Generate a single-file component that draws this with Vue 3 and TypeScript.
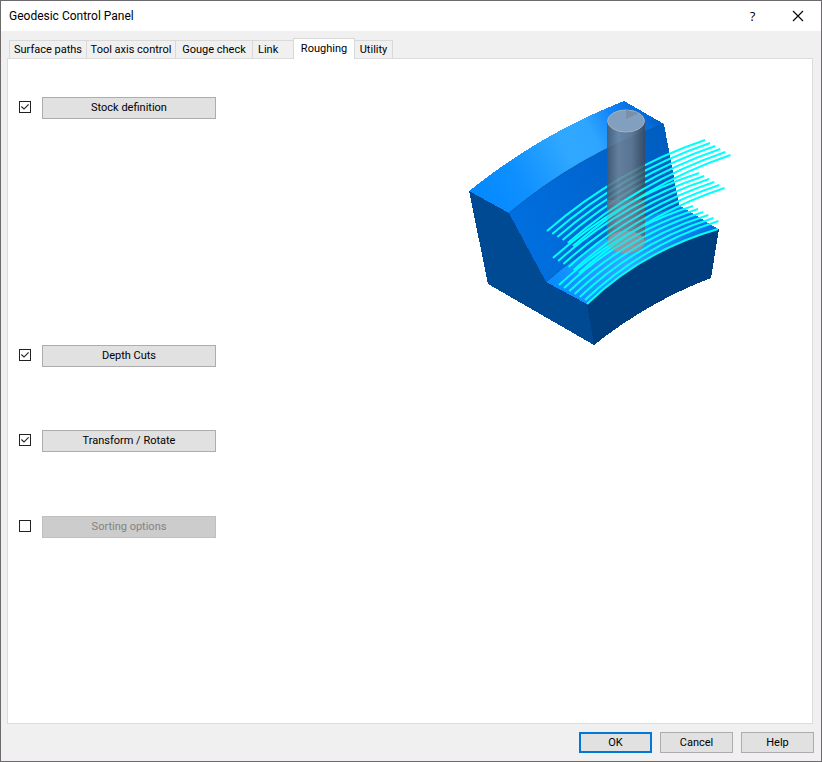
<script setup lang="ts">
import { ref } from 'vue'

interface Option {
  id: string
  label: string
  checked: boolean
}

interface Pass {
  from: [number, number]
  to: [number, number]
  count: number
}

const tabs = ['Surface paths', 'Tool axis control', 'Gouge check', 'Link', 'Roughing', 'Utility']
const activeTab = ref('Roughing')

const options = ref<Option[]>([
  { id: 'stock', label: 'Stock definition', checked: true },
  { id: 'depth', label: 'Depth Cuts', checked: true },
  { id: 'transform', label: 'Transform / Rotate', checked: true },
  { id: 'sorting', label: 'Sorting options', checked: false },
])

// Each pass is a stack of parallel tool paths, stepped towards the viewer.
const passes: Pass[] = [
  { from: [547, 231], to: [705, 140], count: 6 },
  { from: [553, 258], to: [699, 173], count: 6 },
  { from: [559, 285], to: [693, 206], count: 6 },
]

const toolPaths = passes.flatMap(({ from, to, count }) =>
  Array.from({ length: count }, (_, i) => {
    const x1 = from[0] + i * 5.2
    const y1 = from[1] + i * 3
    const x2 = to[0] + i * 5.1
    const y2 = to[1] + i * 3
    const cx = (x1 + x2) / 2 - 8
    const cy = (y1 + y2) / 2 - 16
    return `M${x1} ${y1}Q${cx} ${cy} ${x2} ${y2}`
  }),
)

// The first paths run behind the cutter, the others in front of it.
const pathsBehind = toolPaths.slice(0, 4)
const pathsInFront = toolPaths.slice(4)
</script>

<template>
  <main class="dialog">
    <header class="titlebar">
      <h1>Geodesic Control Panel</h1>
      <button class="caption" type="button" aria-label="Context help">?</button>
      <button class="caption" type="button" aria-label="Close">
        <svg width="12" height="12" viewBox="0 0 12 12"><path d="M1 1L11 11M11 1L1 11" stroke="#000" stroke-width="1.1" /></svg>
      </button>
    </header>

    <nav class="tabs" role="tablist">
      <button
        v-for="tab in tabs"
        :key="tab"
        type="button"
        role="tab"
        class="tab"
        :class="{ active: tab === activeTab, start: tab === 'Link' }"
        :aria-selected="tab === activeTab"
        @click="activeTab = tab"
      >{{ tab }}</button>
    </nav>

    <section class="panel">
      <div class="options">
        <div v-for="option in options" :key="option.id" class="option" :class="option.id">
          <input :id="option.id" v-model="option.checked" type="checkbox" :aria-label="option.label">
          <button class="push wide" type="button" :disabled="!option.checked">{{ option.label }}</button>
        </div>
      </div>

      <svg class="preview" width="280" height="260" viewBox="460 90 280 260">
        <defs>
          <linearGradient id="top" gradientUnits="userSpaceOnUse" x1="490" y1="205" x2="655" y2="115">
            <stop offset="0" stop-color="#058aff" />
            <stop offset=".2" stop-color="#0f90ff" />
            <stop offset=".5" stop-color="#30a8ff" />
            <stop offset=".66" stop-color="#2ea6ff" />
            <stop offset=".8" stop-color="#1284fb" />
            <stop offset="1" stop-color="#0062cc" />
          </linearGradient>
          <linearGradient id="wall" gradientUnits="userSpaceOnUse" x1="520" y1="240" x2="680" y2="160">
            <stop offset="0" stop-color="#006fdf" />
            <stop offset=".35" stop-color="#0069d6" />
            <stop offset="1" stop-color="#005dc0" />
          </linearGradient>
          <linearGradient id="floor" gradientUnits="userSpaceOnUse" x1="560" y1="295" x2="705" y2="215">
            <stop offset="0" stop-color="#0a8cff" />
            <stop offset=".45" stop-color="#30a8ff" />
            <stop offset="1" stop-color="#0070e4" />
          </linearGradient>
          <linearGradient id="cutter" x1="0" x2="1" y1="0" y2="0">
            <stop offset="0" stop-color="#4a5665" />
            <stop offset=".3" stop-color="#778495" />
            <stop offset=".65" stop-color="#6c7887" />
            <stop offset="1" stop-color="#3e4855" />
          </linearGradient>
        </defs>
        <g shape-rendering="crispEdges">
          <path d="M509 213Q578 155 664 124L679 205L718 229L587 304L546 282Z" fill="url(#wall)" />
          <path d="M546 282Q605 230 679 205L718 229Q642 251 587 304Z" fill="url(#floor)" />
          <path d="M469 191Q540 134 624 101L664 124Q578 155 509 213Z" fill="url(#top)" />
          <path d="M469 191L509 213L546 282L587 304L594 345L488 284Z" fill="#004a94" />
          <path d="M587 304Q642 251 719 229L711 278Q648 302 594 345Z" fill="#003f7f" />
        </g>
        <path d="M509 213Q578 155 664 124M546 282Q605 230 679 205" fill="none" stroke="#0757a8" stroke-width=".7" />
        <g class="paths">
          <path v-for="(d, i) in pathsBehind" :key="i" :d="d" />
        </g>
        <path d="M607 121V242A19 11 0 0 0 645 242V121Z" fill="url(#cutter)" opacity=".83" />
        <ellipse cx="626" cy="242" rx="19" ry="11" fill="#9aa6b2" opacity=".75" />
        <ellipse cx="626" cy="121" rx="18.5" ry="11" fill="#829fbf" stroke="#a3b0bd" />
        <path d="M626 119V110L639 113Z" fill="#7890ab" />
        <g class="paths">
          <path v-for="(d, i) in pathsInFront" :key="i" :d="d" />
          <path d="M587 304Q642 251 718 229" />
        </g>
        <path d="M607 200V242A19 11 0 0 0 645 242V200Z" fill="#8a929a" opacity=".3" />
      </svg>
    </section>

    <footer class="actions">
      <button class="push default" type="button">OK</button>
      <button class="push" type="button">Cancel</button>
      <button class="push" type="button">Help</button>
    </footer>
  </main>
</template>

<style>
body {
  margin: 0;
}
</style>

<style scoped>
.dialog {
  box-sizing: border-box;
  display: flex;
  flex-direction: column;
  min-height: 100vh;
  border: 1px solid #6c6a6c;
  background: #f0f0f0;
  color: #000;
  font: 11px/14px Roboto, "Liberation Sans", sans-serif;
}

button {
  margin: 0;
  font: inherit;
  color: inherit;
}

.titlebar {
  display: flex;
  align-items: center;
  height: 30px;
  padding: 0 1px 0 8px;
  background: #fff;
}

h1 {
  flex: 1;
  margin: 0;
  font-size: 12px;
  font-weight: 400;
  line-height: 16px;
}

.caption {
  display: flex;
  align-items: center;
  justify-content: center;
  width: 45px;
  height: 30px;
  padding: 0;
  border: 0;
  background: none;
  font: 13px/16px "Open Sans", sans-serif;
}

.tabs {
  display: grid;
  grid-template-columns: 77px 89px 77px 41px 61px 39px;
  align-items: end;
  height: 20px;
  margin: 7px 0 0 8px;
}

.tab {
  box-sizing: border-box;
  height: 18px;
  padding: 1px 0 0;
  border: 1px solid #d9d9d9;
  border-width: 1px 0 0 1px;
  background: #f0f0f0;
  white-space: nowrap;
}

.tab:last-child {
  border-right-width: 1px;
}

.tab.start {
  padding-left: 5px;
  text-align: left;
}

.tab.active {
  z-index: 1;
  height: 21px;
  margin: 0 -1px -1px 0;
  padding: 0 0 1px;
  border-right-width: 1px;
  background: #fff;
}

.panel {
  display: flex;
  flex: 1;
  justify-content: space-between;
  margin: 0 8px 0 6px;
  padding: 31px 72px 0 11px;
  border: 1px solid #dcdcdc;
  background: #fff;
}

.options {
  display: flex;
  flex-direction: column;
  padding-top: 7px;
}

.option {
  display: flex;
  align-items: center;
  gap: 11px;
  height: 22px;
  margin-bottom: 63px;
}

.option.stock {
  margin-bottom: 226px;
}

.option.transform {
  margin-bottom: 64px;
}

input {
  appearance: none;
  box-sizing: border-box;
  width: 12px;
  height: 12px;
  margin: 0 0 2px;
  border: 1px solid #222;
  background: #fff;
}

input:checked::before {
  content: "";
  display: block;
  width: 10px;
  height: 10px;
  background: #222;
  clip-path: polygon(10% 49%, 18% 41%, 40% 62%, 82% 20%, 90% 28%, 40% 78%);
}

.push {
  box-sizing: border-box;
  width: 73px;
  height: 21px;
  padding: 0;
  border: 1px solid #adadad;
  background: #e1e1e1;
}

.push.wide {
  width: 174px;
  height: 22px;
}

.push:disabled {
  border-color: #bfbfbf;
  background: #ccc;
  color: #838383;
}

.push.default {
  border: 2px solid #0078d7;
}

.actions {
  display: flex;
  justify-content: flex-end;
  gap: 8px;
  padding: 8px 7px 8px 0;
}

.paths {
  fill: none;
  stroke: #00ffff;
  stroke-width: 2;
}
</style>
